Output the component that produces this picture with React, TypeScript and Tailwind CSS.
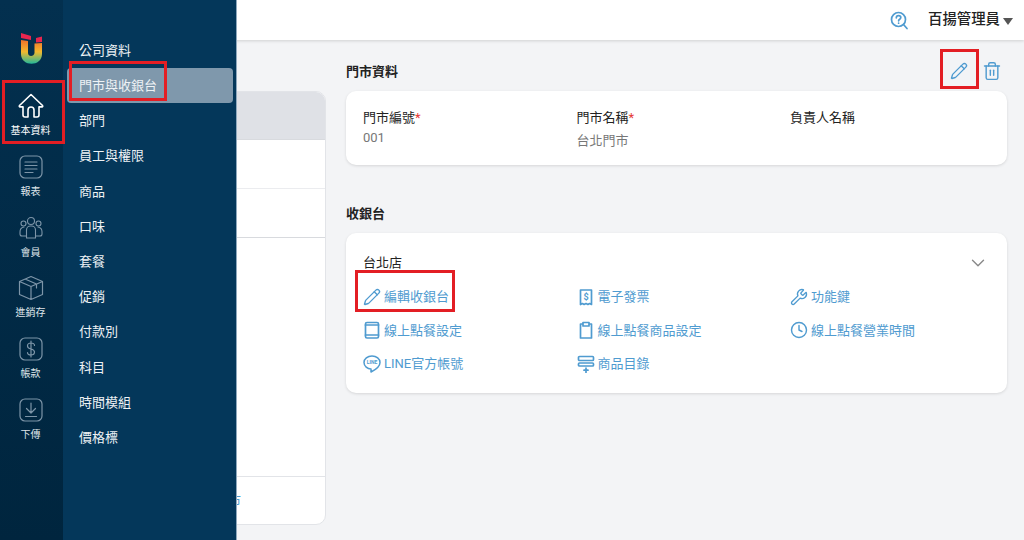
import React from "react";
import { Pencil, Trash2, Wrench, Clock, ChevronDown } from "lucide-react";

const font = { fontFamily: '"Roboto","Noto Sans CJK TC",sans-serif' };

const I = ({ children, size = 34, view = 34, cls = "text-[#7d95a8]", sw = 1.4 }: any) => (
  <svg width={size} height={size} viewBox={`0 0 ${view} ${view}`} fill="none" stroke="currentColor" strokeWidth={sw} strokeLinecap="round" strokeLinejoin="round" className={cls}>
    {children}
  </svg>
);

const Logo = () => (
  <svg width="26" height="34" viewBox="0 0 26 34" fill="none">
    <defs>
      <linearGradient id="lg" x1="0" y1="0" x2="0" y2="1">
        <stop offset="0" stopColor="#f0702a" />
        <stop offset="0.5" stopColor="#f2b92e" />
        <stop offset="1" stopColor="#22b89a" />
      </linearGradient>
    </defs>
    <path d="M3 1 L13 4 V8 L3 6 Z" fill="#e8264f" />
    <path d="M18 6 L24 4.500 V10 L18 10.500 Z" fill="#e8264f" />
    <path d="M3 8 L10 9 V21 C10 25 16 25 16.500 21 V11.500 L24 11 V22 C24 35 3 35 3 22 Z" fill="url(#lg)" />
  </svg>
);

const rail = [
  {
    label: "基本資料",
    active: true,
    icon: (
      <I size={26} view={26} sw={1.6} cls="text-white">
        <path d="M13 1.500 1.500 12.500a.8.8 0 0 0 .6 1.400H5V22a2 2 0 0 0 2 2h3v-7a3 3 0 0 1 6 0v7h3a2 2 0 0 0 2-2v-8.100h2.900a.8.8 0 0 0 .6-1.400z" />
      </I>
    ),
  },
  {
    label: "報表",
    icon: (
      <I size={24} view={24} sw={1.2}>
        <rect x="1" y="1" width="22" height="22" rx="5" />
        <path d="M6 7h12M6 10.500h12M6 14h12M6 17.500h8" />
      </I>
    ),
  },
  {
    label: "會員",
    icon: (
      <I size={24} view={24} sw={1.1}>
        <circle cx="12" cy="5" r="3.500" />
        <circle cx="4.500" cy="7.500" r="2.500" />
        <circle cx="19.500" cy="7.500" r="2.500" />
        <path d="M7.500 22v-8a4 4 0 0 1 4-4h1a4 4 0 0 1 4 4v8zM7 20H3a2 2 0 0 1-2-2v-2a5 5 0 0 1 4-5M17 20h4a2 2 0 0 0 2-2v-2a5 5 0 0 0-4-5" />
      </I>
    ),
  },
  {
    label: "進銷存",
    icon: (
      <I size={26} view={26} sw={1.2}>
        <path d="M13 1.500 24.500 6.500v13L13 24.500 1.500 19.500v-13zM1.500 6.500 13 11.500 24.500 6.500M13 11.500v13M7 4l11.500 5v4" />
      </I>
    ),
  },
  {
    label: "帳款",
    icon: (
      <I size={24} view={24} sw={1.2}>
        <rect x="1" y="1" width="22" height="22" rx="5" />
        <path d="M15.500 8.500C15.500 7 14 6 12 6S8.500 7 8.500 9s1.500 2.500 3.500 3 3.500 1 3.500 3-1.500 3-3.500 3-3.500-1-3.500-2.500M12 4v16" />
      </I>
    ),
  },
  {
    label: "下傳",
    icon: (
      <I size={24} view={24} sw={1.2}>
        <rect x="1" y="1" width="22" height="22" rx="5" />
        <path d="M12 5v10M7.500 10.500 12 15l4.500-4.500M6.500 18.500h11" />
      </I>
    ),
  },
];

const menu = ["公司資料", "門市與收銀台", "部門", "員工與權限", "商品", "口味", "套餐", "促銷", "付款別", "科目", "時間模組", "價格標"];

const Blue = ({ children, size = 18, view = 18, sw = 1.7 }: any) => (
  <I size={size} view={view} sw={sw} cls="text-[#4f9bd0] shrink-0">
    {children}
  </I>
);

const links: [any, string][] = [
  [<Pencil size={18} strokeWidth={1.8} className="text-[#4f9bd0] shrink-0" />, "編輯收銀台"],
  [
    <Blue>
      <path d="M3.500 2h11v14.500l-1.800-1-1.800 1-1.900-1-1.900 1-1.800-1-1.800 1z" />
      <text x="9" y="12" fontSize="9" fontWeight="700" textAnchor="middle" fill="currentColor" stroke="none">$</text>
    </Blue>,
    "電子發票",
  ],
  [<Wrench size={18} strokeWidth={1.8} className="text-[#4f9bd0] shrink-0" />, "功能鍵"],
  [
    <Blue>
      <rect x="2.500" y="1.500" width="13" height="15.500" rx="1.500" />
      <path d="M2.500 4h13M2.500 14h13" />
    </Blue>,
    "線上點餐設定",
  ],
  [
    <Blue>
      <path d="M6 3H3.500v14h11V3H12M6 1.500h6V5H6z" />
    </Blue>,
    "線上點餐商品設定",
  ],
  [<Clock size={18} strokeWidth={1.9} className="text-[#4f9bd0] shrink-0" />, "線上點餐營業時間"],
  [
    <Blue sw={1.5}>
      <path d="M9 1C4.500 1 1 3.800 1 7.500S4.500 14 8 14v3c3-1.500 9-4.500 9-9.500C17 3.800 13.500 1 9 1z" />
      <text x="9" y="9.300" fontSize="5" fontWeight="700" textAnchor="middle" fill="currentColor" stroke="none">LINE</text>
    </Blue>,
    "LINE官方帳號",
  ],
  [
    <Blue>
      <rect x="1.500" y="1.500" width="15" height="4" rx="1" />
      <rect x="1.500" y="8" width="15" height="3" rx="1" />
      <path d="M9 13v4.500M7 15.200h4" />
    </Blue>,
    "商品目錄",
  ],
];

export default function App() {
  return (
    <div style={font} className="relative flex h-[540px] w-[1024px] overflow-hidden bg-[#f3f4f6] text-[13px] text-[#222]">
      <aside className="z-20 flex w-[63px] shrink-0 flex-col items-center bg-gradient-to-b from-[#03304f] to-[#00253e] pr-[2px] pt-[32px]">
        <Logo />
        <div className="mt-[23px] flex flex-col items-center">
          {rail.map((r) => (
            <div key={r.label} className="flex h-[60.800px] flex-col items-center justify-start">
              <div className="flex h-[34px] items-center justify-center">{r.icon}</div>
              <span className={`mt-[1px] text-[10px] leading-[14px] ${r.active ? "text-white" : "text-[#dfe5ea]"}`}>{r.label}</span>
            </div>
          ))}
        </div>
      </aside>

      <nav className="absolute bottom-0 left-[63px] top-0 z-10 w-[174px] border-r border-[#8fa8bd] bg-[#04375a] pl-[4px] pr-[3px] pt-[33px]">
        {menu.map((m, i) => (
          <div
            key={m}
            className={`flex h-[35.200px] items-center rounded-[4px] pl-[12px] text-[13px] text-[#eef2f5] ${i === 1 ? "bg-[#7f98ac]" : ""}`}
          >
            {m}
          </div>
        ))}
      </nav>

      <main className="flex min-w-0 flex-1 flex-col">
        <header className="flex h-10 shrink-0 items-center justify-end bg-white pr-[11px] shadow-[0_1px_3px_rgba(0,0,0,0.15)]">
          <svg width="19" height="19" viewBox="0 0 19 19" fill="none" stroke="#4f9bd0" strokeWidth="1.7" strokeLinecap="round">
            <circle cx="8.500" cy="8.500" r="7" />
            <path d="M13.500 13.500 17 17.500M6.300 6.800c0-1.300 1-2.200 2.300-2.200s2.200.9 2.200 2c0 1.600-2.200 1.600-2.200 3.200M8.600 12v.2" />
          </svg>
          <span className="ml-[19px] text-[14.400px] font-medium text-[#222]">百揚管理員</span>
          <span className="ml-[3px] mt-[2px] h-0 w-0 border-x-[5px] border-t-[7px] border-x-transparent border-t-[#555]" />
        </header>

        <div className="flex min-h-0 flex-1 pl-[17px] pr-[17px]">
          <section className="mb-[15px] mt-[51px] flex w-[246px] shrink-0 flex-col overflow-hidden rounded-[10px] border border-[#e2e4e8] bg-white">
            <div className="h-[48px] shrink-0 border-b border-[#d8dade] bg-[#dfe1e6]" />
            <div className="h-[49px] shrink-0 border-b border-[#ebecef]" />
            <div className="h-[49px] shrink-0 border-b border-[#d8dade]" />
            <div className="flex-1" />
            <div className="flex h-[48px] shrink-0 items-center justify-end border-t border-[#e2e4e8] pr-[84px] text-[#4f9bd0]">新增門市</div>
          </section>

          <section className="ml-[20px] min-w-0 flex-1">
            <div className="flex h-[51px] items-end justify-between pb-[10px]">
              <h2 className="text-[13px] font-bold leading-[18px] text-[#222]">門市資料</h2>
              <div className="mr-[5px] flex items-center gap-[14px]">
                <Pencil size={18} strokeWidth={1.8} className="text-[#4f9bd0]" />
                <Trash2 size={20} strokeWidth={1.7} className="text-[#4f9bd0]" />
              </div>
            </div>
            <div className="grid h-[74px] grid-cols-[213.500px_213.500px_1fr] rounded-[10px] bg-white px-[17px] pt-[18px] shadow-[0_1px_3px_rgba(0,0,0,0.12)]">
              <div>
                <div className="leading-[18px]">門市編號<span className="text-[#e53935]">*</span></div>
                <div className="mt-[2px] leading-[18px] text-[#777]">001</div>
              </div>
              <div>
                <div className="leading-[18px]">門市名稱<span className="text-[#e53935]">*</span></div>
                <div className="mt-[5px] leading-[18px] text-[#777]">台北門市</div>
              </div>
              <div>
                <div className="leading-[18px]">負責人名稱</div>
              </div>
            </div>

            <h2 className="mt-[40px] text-[13px] font-bold leading-[18px] text-[#222]">收銀台</h2>
            <div className="mt-[10px] h-[160px] rounded-[10px] bg-white px-[17px] pt-[21px] shadow-[0_1px_3px_rgba(0,0,0,0.12)]">
              <div className="flex h-[18px] items-center justify-between">
                <span className="leading-[18px]">台北店</span>
                <ChevronDown size={22} strokeWidth={1.5} className="mr-[1px] text-[#888]" />
              </div>
              <div className="mt-[8px] grid grid-cols-[213.500px_213.500px_1fr]">
                {links.map(([icon, text]) => (
                  <div key={text} className="flex h-[33.500px] items-center gap-[3px] text-[#4f9bd0]">
                    {icon}
                    <span>{text}</span>
                  </div>
                ))}
              </div>
            </div>
          </section>
        </div>
      </main>

      <div className="absolute left-[2px] top-[80px] z-30 h-[64px] w-[63px] border-[3px] border-[#e31e24]" />
      <div className="absolute left-[69px] top-[61px] z-30 h-[40px] w-[98px] border-[3px] border-[#e31e24]" />
      <div className="absolute left-[940px] top-[49px] z-30 h-[40px] w-[39px] border-[3px] border-[#e31e24]" />
      <div className="absolute left-[355px] top-[270px] z-30 h-[42px] w-[100px] border-[3px] border-[#e31e24]" />
    </div>
  );
}
